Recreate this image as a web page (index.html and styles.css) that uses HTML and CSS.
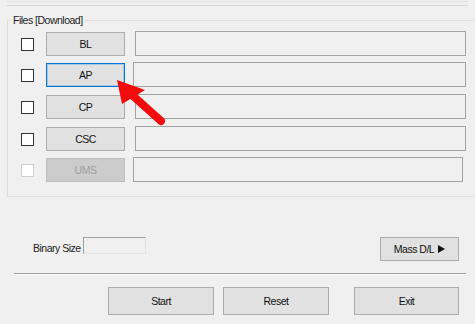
FILE: index.html
```html
<!DOCTYPE html>
<html lang="en">
<head>
    <meta charset="UTF-8">
    <title>Odin</title>
    <link rel="stylesheet" href="styles.css">
</head>
<body>
<div id="wrap">

    <div class="top_box"></div>

    <fieldset class="files">
        <legend>Files [Download]</legend>

        <div class="row">
            <span class="check"></span>
            <span class="btn">BL</span>
            <span class="field"></span>
        </div>

        <div class="row row_b">
            <span class="check"></span>
            <span class="btn focus">AP</span>
            <span class="field shift"></span>
        </div>

        <div class="row row_b">
            <span class="check"></span>
            <span class="btn">CP</span>
            <span class="field"></span>
        </div>

        <div class="row">
            <span class="check"></span>
            <span class="btn">CSC</span>
            <span class="field"></span>
        </div>

        <div class="row row_last">
            <span class="check disabled"></span>
            <span class="btn disabled">UMS</span>
            <span class="field shift short"></span>
        </div>
    </fieldset>

    <div class="bin_row">
        <span class="bin_label">Binary Size</span>
        <span class="bin_input"></span>
        <span class="btn mass">Mass D/L <i class="tri"></i></span>
    </div>

    <div class="sep"></div>

    <div class="actions">
        <span class="btn big">Start</span>
        <span class="btn big">Reset</span>
        <span class="btn big exit">Exit</span>
    </div>

    <svg class="arrow" width="475" height="324" viewBox="0 0 475 324">
        <polygon points="117,80 122,104 145,90" fill="#f20c0c"/>
        <line x1="132" y1="95" x2="161" y2="121" stroke="#f20c0c" stroke-width="8" stroke-linecap="round"/>
    </svg>
</div>
</body>
</html>
```

FILE: styles.css
```css
body, div, fieldset, legend {
    margin: 0;
    padding: 0;
}
body{
    background: #f0f0f0;
    font-family: "Liberation Sans", Arial, sans-serif;
    font-size: 10.5px;
    letter-spacing: -0.5px;
    color: #000;
}
#wrap{
    width: 475px;
    height: 324px;
    position: relative;
    overflow: hidden;
}
.top_box{
    margin: 1px 0 0 7px;
    width: 461px;
    height: 3px;
    border-top: 1px solid #e2e2e2;
    border-bottom: 1px solid #d8d8d8;
}
.files{
    margin: 8px 0 0 7px;
    width: 480px;
    border: 1px solid #dcdcdc;
    padding: 4px 0 14px 13px;
}
.files legend{
    margin-left: -10px;
    padding: 0 2px;
    line-height: 13px;
    color: #222;
}
.row{
    display: flex;
    align-items: flex-start;
    height: 31px;
}
.row_b{
    height: 32px;
}
.row_last{
    height: 25px;
}
.check{
    width: 13px;
    height: 13px;
    box-sizing: border-box;
    border: 1px solid #333;
    background: #fff;
    margin: 7px 12px 0 0;
}
.check.disabled{
    border-color: #cfcfcf;
}
.btn{
    display: flex;
    align-items: center;
    justify-content: center;
    box-sizing: border-box;
    width: 79px;
    height: 24px;
    border: 1px solid #adadad;
    background: #e1e1e1;
    color: #111;
}
.row .btn{
    margin: 1px 10px 0 0;
}
.btn.focus{
    border-color: #0078d7;
    box-shadow: inset 0 0 0 1px rgba(0, 120, 215, .25);
}
.btn.disabled{
    background: #cccccc;
    border-color: #bfbfbf;
    color: #a0a0a0;
}
.field{
    width: 331px;
    height: 25px;
    box-sizing: border-box;
    border: 1px solid #a3a3a3;
    background: #f0f0f0;
}
.field.shift{
    margin-left: -2px;
    width: 333px;
}
.field.short{
    width: 330px;
}
.bin_row{
    display: flex;
    align-items: flex-start;
    margin-top: 40px;
    padding: 0 16px 0 33px;
}
.bin_label{
    line-height: 17px;
    margin-top: 3px;
    color: #222;
}
.bin_input{
    width: 63px;
    height: 17px;
    box-sizing: border-box;
    margin-left: 2px;
    border: 1px solid #e3e3e3;
    border-top-color: #a0a0a0;
    border-left-color: #a0a0a0;
}
.btn.mass{
    margin-left: auto;
    width: 79px;
    height: 24px;
}
.tri{
    display: inline-block;
    width: 0;
    height: 0;
    margin-left: 4px;
    border-top: 4px solid transparent;
    border-bottom: 4px solid transparent;
    border-left: 7px solid #111;
}
.sep{
    margin: 12px 0 0 14px;
    width: 452px;
    border-top: 1px solid #a0a0a0;
    border-bottom: 1px solid #fcfcfc;
}
.actions{
    display: flex;
    margin-top: 12px;
    padding-left: 108px;
    gap: 9px;
}
.btn.big{
    width: 106px;
    height: 28px;
}
.btn.exit{
    width: 105px;
    margin-left: 16px;
}
.arrow{
    position: absolute;
    left: 0;
    top: 0;
}
```
